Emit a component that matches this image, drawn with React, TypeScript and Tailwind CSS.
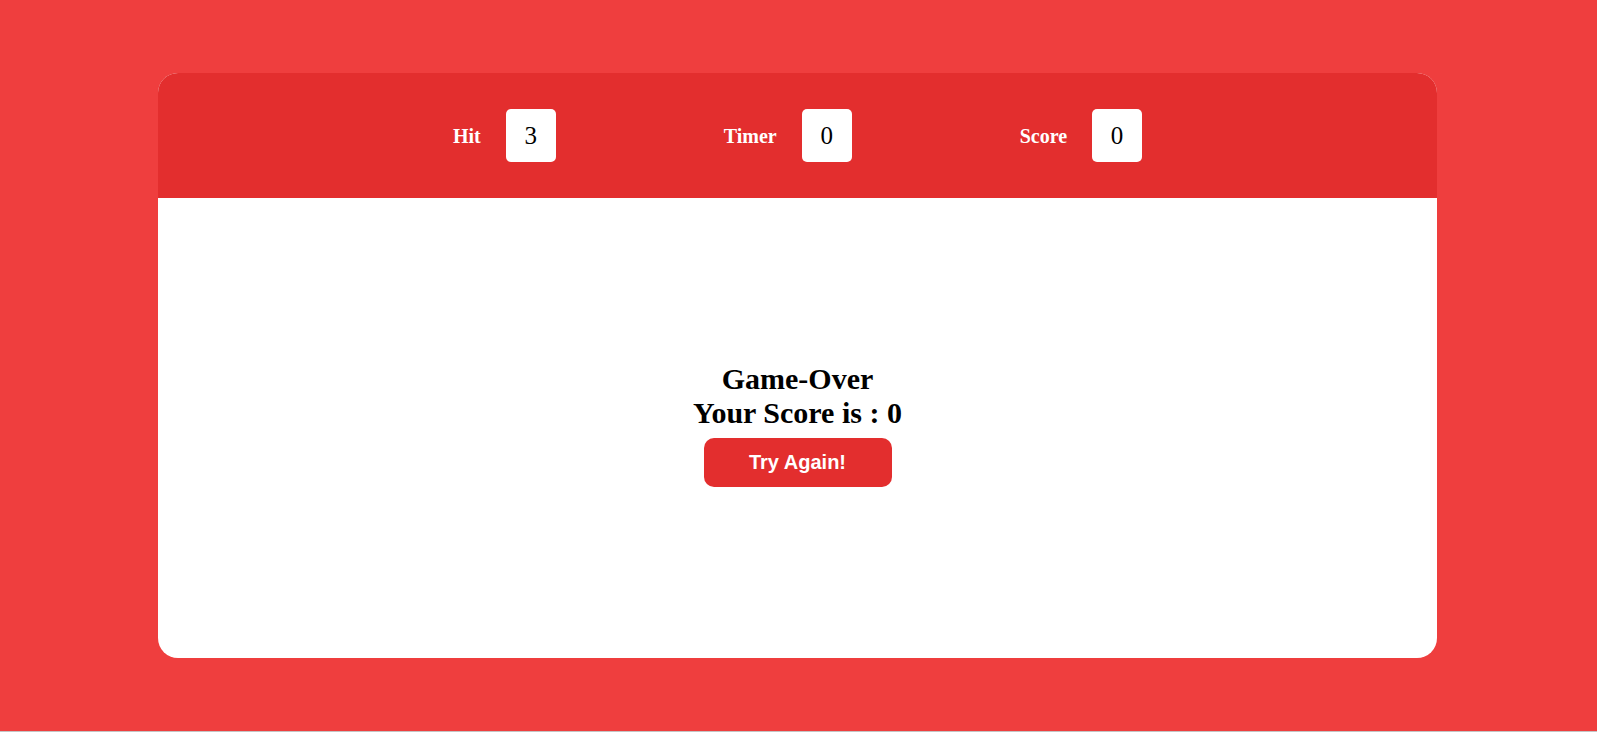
const Stat = ({ label, value }: { label: string; value: number }) => (
  <div className="flex items-center gap-[25px]">
    <span className="text-[20px] font-bold text-white">{label}</span>
    <div className="flex h-[53px] w-[50px] items-center justify-center rounded-[5px] bg-white text-[25px] text-black">
      {value}
    </div>
  </div>
);

export default function App() {
  return (
    <div
      className="flex h-screen items-center justify-center border-b border-[#c4c4c4] bg-[#ef3e3e] pr-[2px]"
      style={{ fontFamily: '"Liberation Serif", "Times New Roman", serif' }}
    >
      <div className="flex h-[585px] w-[1279px] flex-col overflow-hidden rounded-[20px] bg-white">
        {/* Top bar */}
        <div className="flex h-[125px] shrink-0 items-center justify-center gap-[168px] bg-[#e32e2e]">
          <Stat label="Hit" value={3} />
          <Stat label="Timer" value={0} />
          <Stat label="Score" value={0} />
        </div>

        {/* Game area */}
        <div className="flex flex-1 flex-col items-center justify-center pb-[8px]">
          <h2 className="text-[30px] font-bold leading-[34px] text-black">Game-Over</h2>
          <h2 className="text-[30px] font-bold leading-[34px] text-black">Your Score is : 0</h2>
          <button
            className="mt-[8px] h-[49px] w-[188px] rounded-[10px] bg-[#e32e2e] text-[20px] font-bold text-white"
            style={{ fontFamily: '"Liberation Sans", Arial, sans-serif' }}
          >
            Try Again!
          </button>
        </div>
      </div>
    </div>
  );
}
